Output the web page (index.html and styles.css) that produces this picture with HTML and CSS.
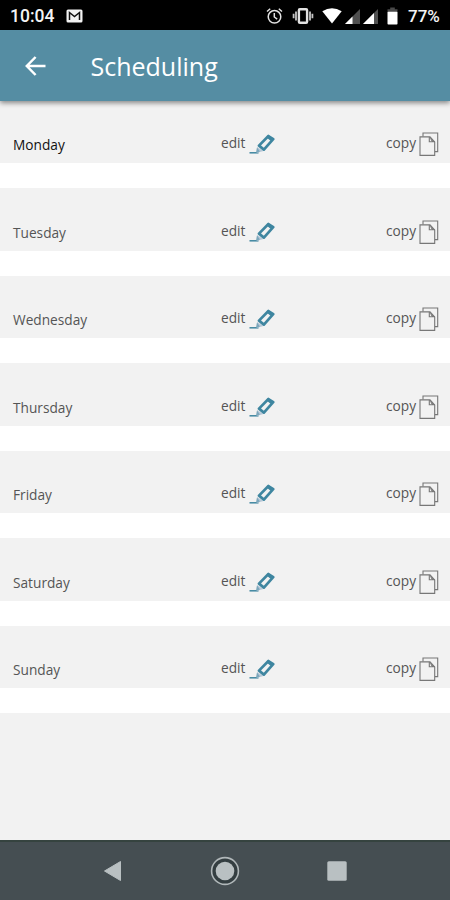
FILE: index.html
```html
<!DOCTYPE html>
<html lang="en">

<head>
    <meta charset="utf-8">
    <title>Scheduling</title>
    <link rel="stylesheet" href="styles.css">
</head>

<body>
    <svg class="sprite">
        <symbol id="pencil" viewBox="0 0 26 20">
            <path d="M0.5 18.8 H9.5" stroke="#3f86a0" stroke-width="1.5" />
            <path d="M8 13 L14.5 17 L7.5 19 Z" fill="#b9c9d8" />
            <path d="M8 13.5 L6.8 18.8 L11 17.6 Z" fill="#3f86a0" opacity="0.5" />
            <path d="M10 11.6 L19.4 2 L24.2 5.2 L14.9 15.6 Z" fill="none" stroke="#3f86a0" stroke-width="2.7" stroke-linejoin="round" />
            <path d="M17.4 3.6 L19.6 1.3 L24.8 4.9 L22.6 7.6 Z" fill="#3f86a0" />
        </symbol>
        <symbol id="copy" viewBox="0 0 20 25">
            <g fill="none" stroke="#777" stroke-width="1.1">
                <path d="M4 4.5 V1 H18.7 V19.6 H16" />
                <path d="M1 4.9 H11 L15.7 10 V23.4 H1 Z" />
                <path d="M10.3 5 V9.8 H15.7" />
            </g>
            <path d="M10.3 5 L15.7 9.9 H13 Z" fill="#777" />
        </symbol>
    </svg>

    <div class="status">
        <span class="time">10:04</span>
        <svg class="mail" width="17" height="14" viewBox="0 0 17 14">
            <rect x="0.5" y="0.5" width="16" height="13" rx="1.5" fill="#f2f2f2" />
            <path d="M3.5 11 V3.5 L8.5 7.5 L13.5 3.5 V11" fill="none" stroke="#111" stroke-width="1.5" />
        </svg>
        <svg class="alarm" width="17" height="18" viewBox="0 0 17 18">
            <g fill="none" stroke="#e2e2e2" stroke-width="1.5">
                <circle cx="8.5" cy="9.8" r="6.3" />
                <path d="M8.3 6 V10 L11.2 12.2 M1 4.5 L4.2 1.8 M16 4.5 L12.8 1.8" />
            </g>
        </svg>
        <svg class="vibrate" width="22" height="18" viewBox="0 0 22 18">
            <rect x="6.9" y="2.2" width="8.2" height="13.6" rx="1" fill="none" stroke="#e2e2e2" stroke-width="2.4" />
            <path d="M4 4.5 V13.5 M18 4.5 V13.5 M1.6 6.8 V11.2 M20.4 6.8 V11.2" stroke="#c4c4c4" stroke-width="1.8" />
        </svg>
        <svg class="wifi" width="20" height="16" viewBox="0 0 20 16">
            <path d="M0.3 3.2 Q10 -2.6 19.7 3.2 L10 15.5 Z" fill="#fff" />
        </svg>
        <svg class="signal" width="15" height="15" viewBox="0 0 15 15">
            <path d="M0 15 L15 0 V15 Z" fill="#505050" />
            <path d="M0 15 L7.5 7.5 V15 Z" fill="#fff" />
        </svg>
        <svg class="signal" width="15" height="15" viewBox="0 0 15 15">
            <path d="M0 15 L15 0 V15 Z" fill="#505050" />
            <path d="M0 15 L11 4 V15 Z" fill="#fff" />
        </svg>
        <svg class="battery" width="11" height="18" viewBox="0 0 11 18">
            <path d="M0.5 2.2 H3.2 V0.5 H7.8 V2.2 H10.5 V5 H0.5 Z" fill="#4a4a4a" />
            <rect x="0.5" y="4.8" width="10" height="12.7" rx="0.8" fill="#fff" />
        </svg>
        <span class="percent">77%</span>
    </div>

    <div class="header">
        <svg class="back" width="22" height="20" viewBox="0 0 22 20">
            <path d="M10.6 1 L1.8 10 L10.6 19 M2 10 H20.5" fill="none" stroke="#fff" stroke-width="2.5" />
        </svg>
        <span class="title">Scheduling</span>
    </div>

    <div class="days">
        <div class="day active">
            <span class="name">Monday</span>
            <span class="action">edit</span><svg class="pencil"><use href="#pencil" /></svg>
            <span class="action copy">copy</span><svg class="pages"><use href="#copy" /></svg>
        </div>
        <div class="day">
            <span class="name">Tuesday</span>
            <span class="action">edit</span><svg class="pencil"><use href="#pencil" /></svg>
            <span class="action copy">copy</span><svg class="pages"><use href="#copy" /></svg>
        </div>
        <div class="day">
            <span class="name">Wednesday</span>
            <span class="action">edit</span><svg class="pencil"><use href="#pencil" /></svg>
            <span class="action copy">copy</span><svg class="pages"><use href="#copy" /></svg>
        </div>
        <div class="day">
            <span class="name">Thursday</span>
            <span class="action">edit</span><svg class="pencil"><use href="#pencil" /></svg>
            <span class="action copy">copy</span><svg class="pages"><use href="#copy" /></svg>
        </div>
        <div class="day">
            <span class="name">Friday</span>
            <span class="action">edit</span><svg class="pencil"><use href="#pencil" /></svg>
            <span class="action copy">copy</span><svg class="pages"><use href="#copy" /></svg>
        </div>
        <div class="day">
            <span class="name">Saturday</span>
            <span class="action">edit</span><svg class="pencil"><use href="#pencil" /></svg>
            <span class="action copy">copy</span><svg class="pages"><use href="#copy" /></svg>
        </div>
        <div class="day">
            <span class="name">Sunday</span>
            <span class="action">edit</span><svg class="pencil"><use href="#pencil" /></svg>
            <span class="action copy">copy</span><svg class="pages"><use href="#copy" /></svg>
        </div>
    </div>

    <div class="navbar">
        <svg width="20" height="22" viewBox="0 0 20 22">
            <path d="M1.5 11 L17.5 1.5 V20.5 Z" fill="#b9c0c2" stroke="#b9c0c2" stroke-linejoin="round" />
        </svg>
        <svg width="30" height="30" viewBox="0 0 30 30">
            <circle cx="15" cy="15" r="13.4" fill="#343e41" stroke="#b0b7b9" stroke-width="1.6" />
            <circle cx="15" cy="15" r="9.3" fill="#b9c0c2" />
        </svg>
        <svg width="20" height="20" viewBox="0 0 20 20">
            <rect x="0.3" y="0.3" width="19.4" height="19.4" rx="1.5" fill="#b9c0c2" />
        </svg>
    </div>
</body>

</html>
```
FILE: styles.css
```css
* {
    box-sizing: border-box;
}

html,
body {
    width: 100%;
    height: 100%;
    padding: 0;
    margin: 0;
}

body {
    display: flex;
    flex-direction: column;
    overflow: hidden;
    background: #f2f2f2;
    font-family: "Open Sans", sans-serif;
}

svg {
    display: block;
    flex: none;
}

.sprite {
    position: absolute;
    width: 0;
    height: 0;
}

.status {
    flex: none;
    display: flex;
    align-items: center;
    height: 30px;
    padding: 2px 9px 0 10px;
    background: #000;
    color: #f4f4f4;
    font-family: Roboto, sans-serif;
    font-weight: 500;
    font-size: 17.5px;
}

.time {
    width: 56px;
}

.alarm {
    margin-left: auto;
}

.vibrate {
    margin-left: 9px;
}

.wifi {
    margin-left: 8px;
}

.signal {
    margin-left: 3px;
}

.battery {
    margin-left: 9px;
}

.percent {
    width: 33px;
    margin-left: 10px;
    font-size: 17px;
}

.header {
    position: relative;
    flex: none;
    display: flex;
    align-items: center;
    height: 70.5px;
    padding: 1px 0 0 25px;
    background: #558da3;
    box-shadow: 0 2px 5px rgba(0, 0, 0, 0.45);
    color: #fff;
}

.title {
    margin-left: 43.5px;
    font-size: 25px;
}

.days {
    flex: 1;
}

.day {
    display: flex;
    align-items: flex-end;
    height: 87.5px;
    padding: 0 11px 6px 13px;
    border-bottom: 25px solid #fff;
    color: #555;
    font-size: 13.7px;
    line-height: 18px;
}

.name {
    width: 208px;
    padding-bottom: 3px;
}

.active .name {
    color: #111;
}

.action {
    padding-bottom: 5px;
}

.pencil {
    width: 26px;
    height: 20px;
    margin: 0 0 3px 3.5px;
}

.copy {
    margin-left: auto;
}

.pages {
    width: 20px;
    height: 25px;
    margin-left: 3px;
}

.navbar {
    flex: none;
    display: flex;
    align-items: center;
    justify-content: space-between;
    height: 60px;
    padding: 0 103px;
    border-top: 2px solid #35433f;
    background: #454e52;
}
```
